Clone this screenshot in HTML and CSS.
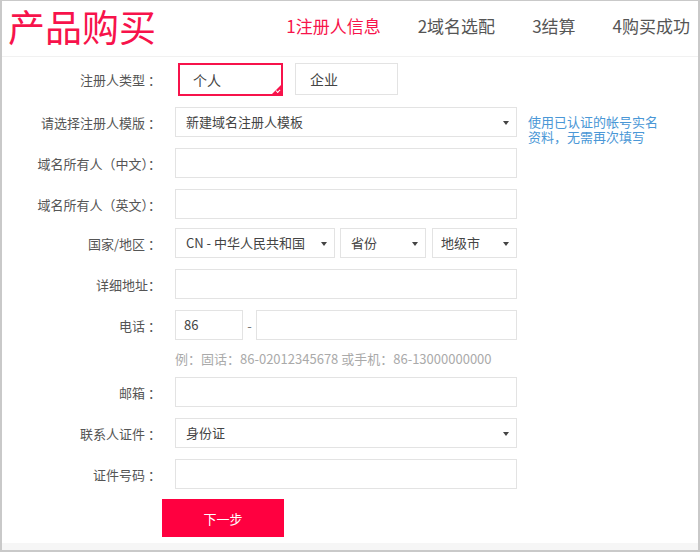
FILE: index.html
```html
<!DOCTYPE html>
<html lang="zh-CN">
<head>
  <meta charset="UTF-8" />
  <meta name="viewport" content="width=device-width, initial-scale=1.0"/>
  <title>产品购买 - 注册人信息</title>
  <link rel="stylesheet" href="styles.css">
</head>
<body>
  <div class="page">
    <div class="header">
      <h1 class="title">产品购买</h1>
      <div class="steps">
        <span class="step active">1注册人信息</span>
        <span class="step">2域名选配</span>
        <span class="step">3结算</span>
        <span class="step">4购买成功</span>
      </div>
    </div>

    <div class="form">
      <div class="row row-type">
        <label class="label">注册人类型 ：</label>
        <div class="choices">
          <div class="choice selected">个人</div>
          <div class="choice">企业</div>
        </div>
      </div>

      <div class="row">
        <label class="label">请选择注册人模版 ：</label>
        <div class="select wide">新建域名注册人模板</div>
        <div class="side-tip">使用已认证的帐号实名资料，无需再次填写</div>
      </div>

      <div class="row">
        <label class="label">域名所有人（中文）：</label>
        <div class="input wide"></div>
      </div>

      <div class="row">
        <label class="label">域名所有人（英文）：</label>
        <div class="input wide"></div>
      </div>

      <div class="row row-region">
        <label class="label">国家/地区 ：</label>
        <div class="select country">CN - 中华人民共和国</div>
        <div class="select province">省份</div>
        <div class="select city">地级市</div>
      </div>

      <div class="row">
        <label class="label">详细地址：</label>
        <div class="input wide"></div>
      </div>

      <div class="row">
        <label class="label">电话 ：</label>
        <div class="input area">86</div>
        <span class="dash">-</span>
        <div class="input phone"></div>
      </div>

      <div class="hint">例：固话：86-02012345678 或手机：86-13000000000</div>

      <div class="row">
        <label class="label">邮箱 ：</label>
        <div class="input wide"></div>
      </div>

      <div class="row">
        <label class="label">联系人证件 ：</label>
        <div class="select wide">身份证</div>
      </div>

      <div class="row">
        <label class="label">证件号码 ：</label>
        <div class="input wide"></div>
      </div>

      <div class="actions">
        <button class="btn-next">下一步</button>
      </div>
    </div>

    <div class="footer-strip"></div>
  </div>
</body>
</html>
```

FILE: styles.css
```css
* {
  margin: 0;
  padding: 0;
  box-sizing: border-box;
  font-family: "Microsoft YaHei", "Noto Sans CJK SC", "Liberation Sans", sans-serif;
}

body {
  background-color: #fff;
}

.page {
  width: 700px;
  height: 552px;
  border: 2px solid #c9c9c9;
  border-top-width: 1px;
  display: flex;
  flex-direction: column;
  background-color: #fff;
}

.header {
  height: 56px;
  display: flex;
  align-items: center;
  padding: 0 8px 0 6px;
  border-bottom: 1px solid #f1f1f1;
}

.title {
  font-size: 37px;
  font-weight: 400;
  color: #f7134b;
  line-height: 40px;
  margin-top: -6px;
  letter-spacing: 0;
}

.steps {
  margin-left: auto;
  display: flex;
  gap: 37px;
  margin-top: -6px;
}

.step {
  font-size: 17px;
  color: #555;
}

.step.active {
  color: #f7134b;
}

.form {
  flex-grow: 1;
  padding-top: 6px;
}

.row {
  display: flex;
  align-items: center;
  height: 30px;
  margin-bottom: 11px;
}

.row-type {
  height: 33px;
}

.row-region {
  margin-top: -2px;
}

.label {
  width: 173px;
  padding-right: 14px;
  text-align: right;
  font-size: 13px;
  color: #555;
}

.choices {
  display: flex;
  gap: 12px;
  margin-left: 3px;
}

.choice {
  position: relative;
  width: 103px;
  height: 32px;
  line-height: 30px;
  padding-left: 14px;
  border: 1px solid #e3e3e3;
  font-size: 14px;
  color: #444;
}

.choice.selected {
  width: 105px;
  height: 33px;
  border: 2px solid #f7134b;
  padding-left: 13px;
}

.choice.selected::after {
  content: "";
  position: absolute;
  right: 0;
  bottom: 0;
  border-style: solid;
  border-width: 0 0 9px 9px;
  border-color: transparent transparent #f7134b transparent;
}

.choice.selected::before {
  content: "";
  position: absolute;
  right: 1px;
  bottom: 2px;
  width: 3px;
  height: 2px;
  border-left: 1px solid #fff;
  border-bottom: 1px solid #fff;
  transform: rotate(-45deg);
  z-index: 1;
}

.input,
.select {
  position: relative;
  height: 30px;
  line-height: 28px;
  border: 1px solid #e3e3e3;
  font-size: 13px;
  color: #444;
  padding-left: 10px;
  background-color: #fff;
}

.select::after {
  content: "";
  position: absolute;
  right: 7px;
  top: 13px;
  border-style: solid;
  border-width: 4px 3px 0 3px;
  border-color: #444 transparent transparent transparent;
}

.wide {
  width: 342px;
}

.country {
  width: 160px;
}

.province {
  width: 86px;
  margin-left: 5px;
}

.city {
  width: 85px;
  margin-left: 6px;
  padding-left: 8px;
}

.area {
  width: 68px;
  padding-left: 8px;
}

.dash {
  width: 13px;
  text-align: center;
  font-size: 13px;
  color: #777;
}

.phone {
  width: 261px;
}

.side-tip {
  width: 136px;
  margin-left: 11px;
  margin-top: 14px;
  font-size: 13px;
  line-height: 15px;
  color: #4a97d6;
}

.hint {
  margin-left: 173px;
  margin-top: 0;
  margin-bottom: 11px;
  height: 15px;
  line-height: 15px;
  font-size: 13px;
  color: #aaa;
}

.actions {
  padding-left: 160px;
  margin-top: -1px;
}

.btn-next {
  width: 122px;
  height: 38px;
  border: none;
  background-color: #ff0040;
  color: #fff;
  font-size: 13px;
  cursor: pointer;
}

.footer-strip {
  height: 7px;
  background-color: #f6f6f6;
}
```
